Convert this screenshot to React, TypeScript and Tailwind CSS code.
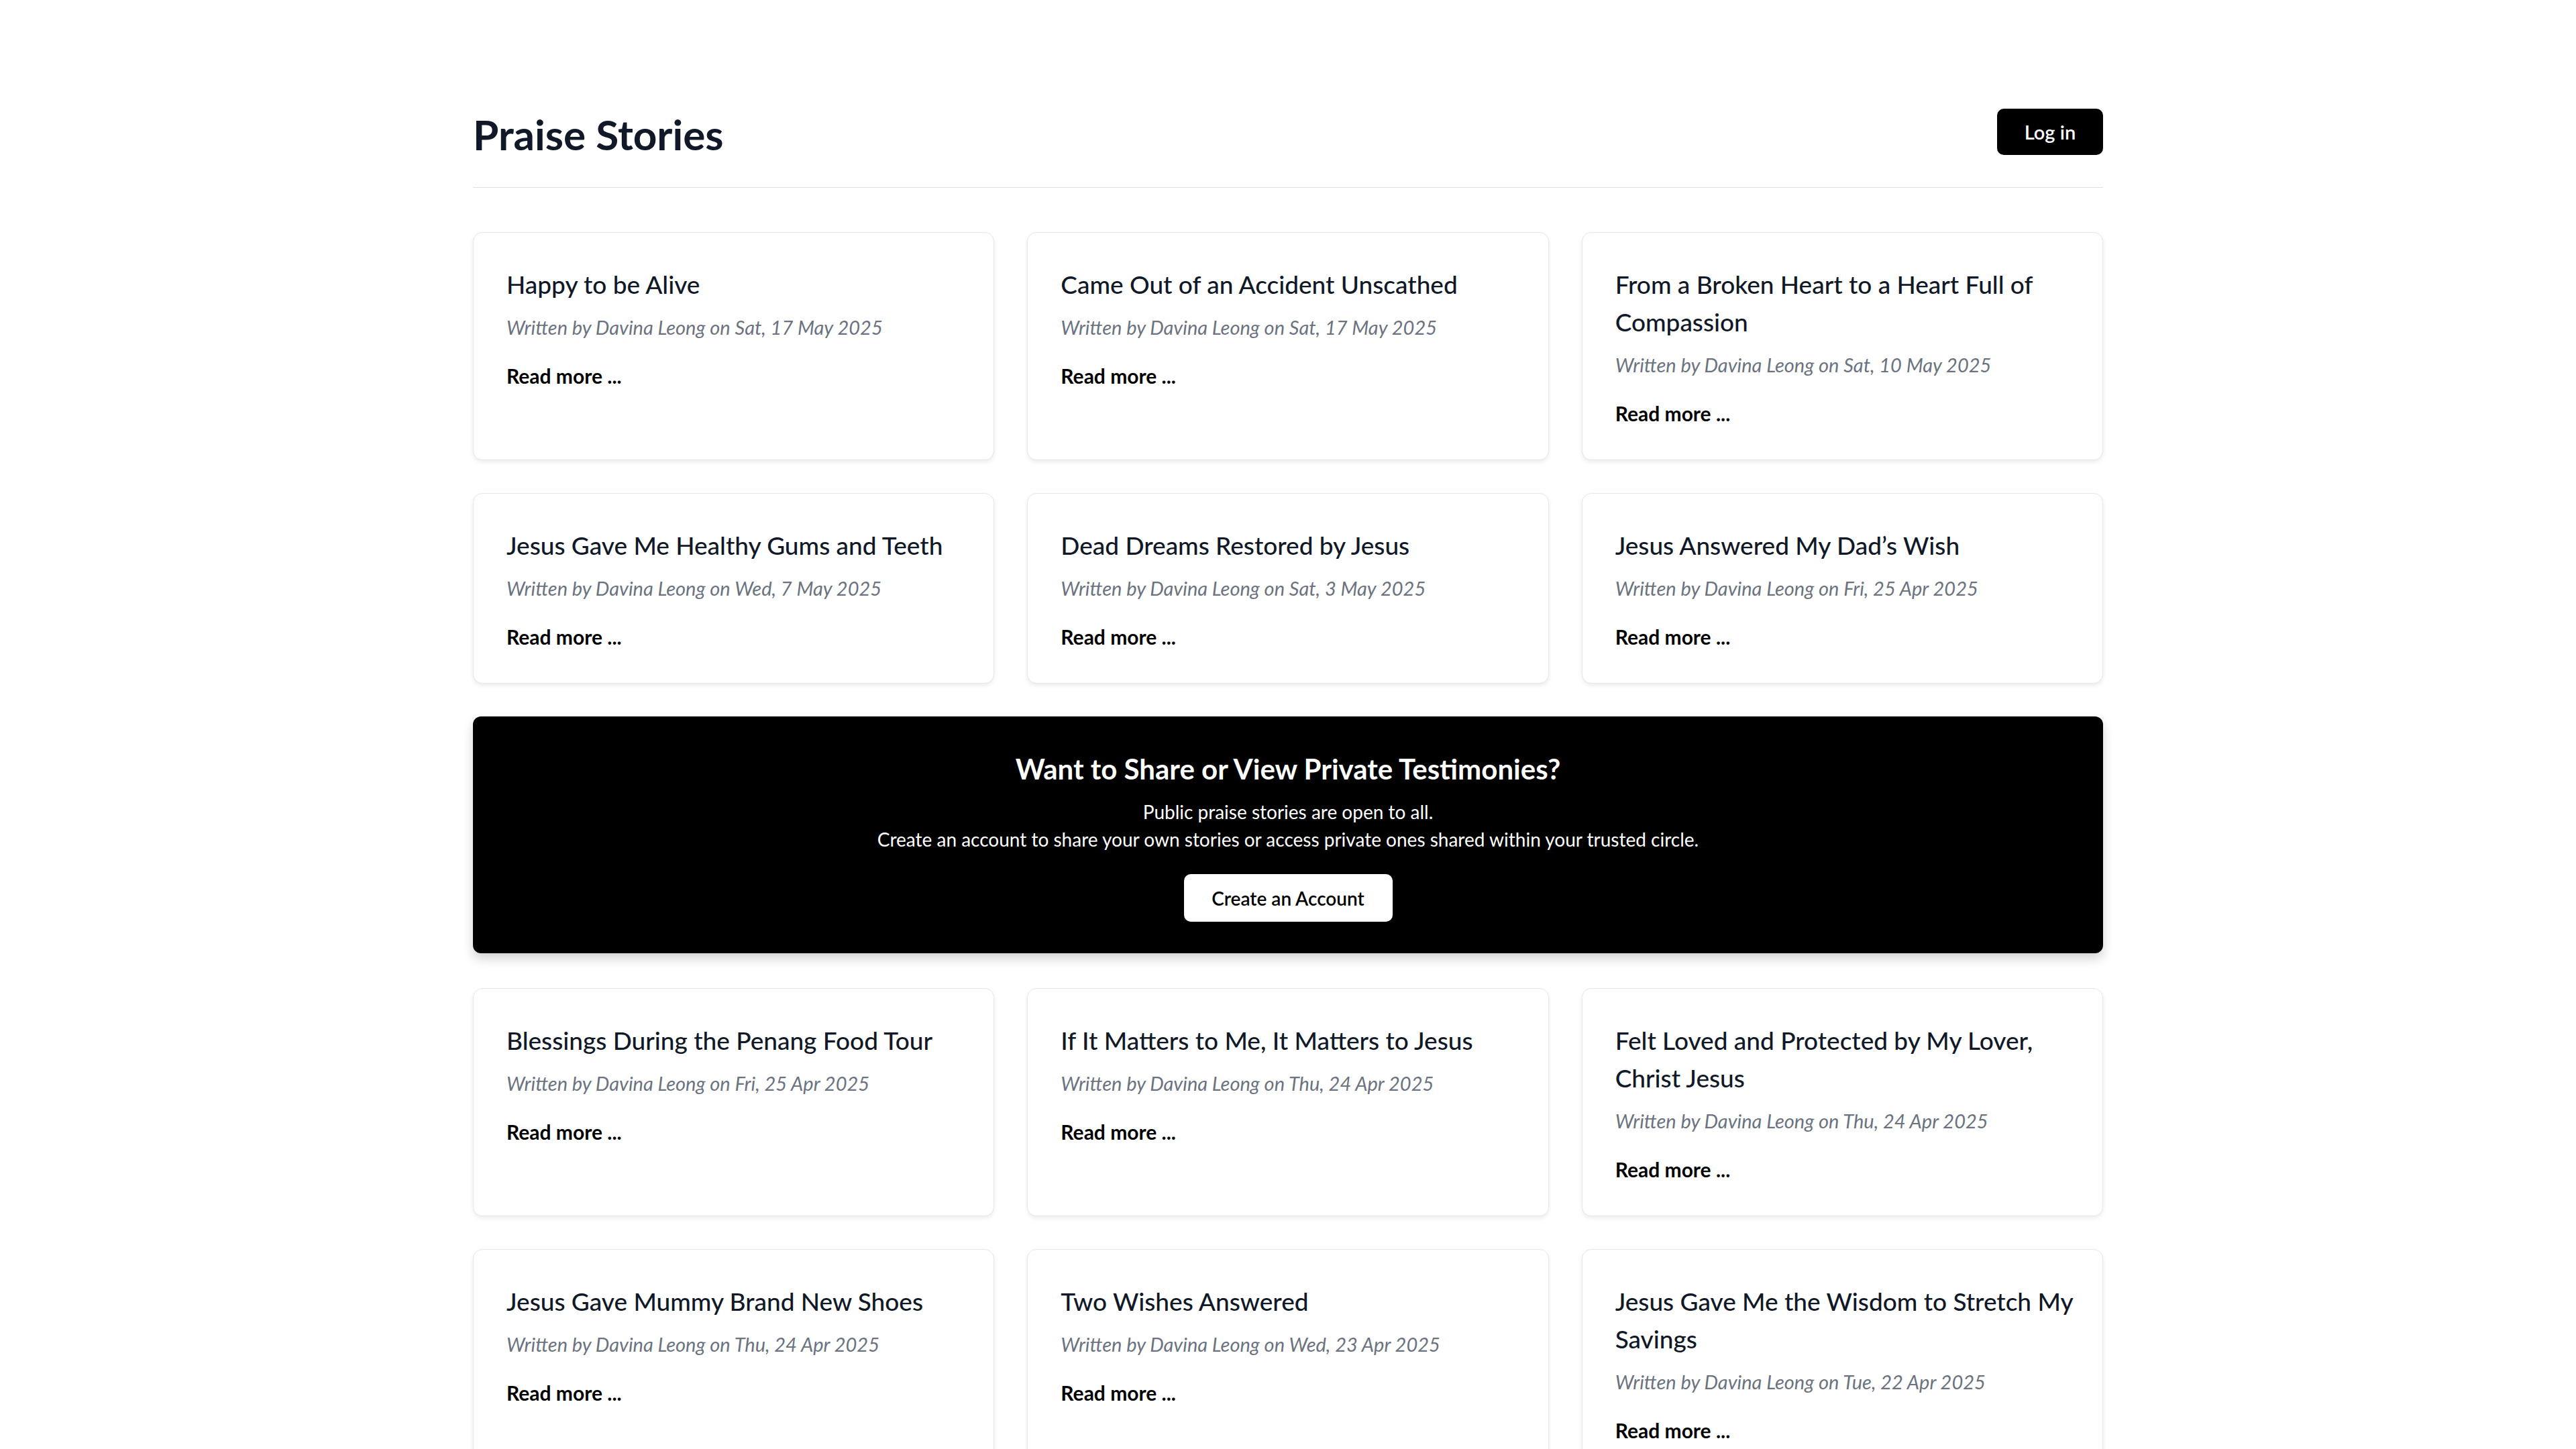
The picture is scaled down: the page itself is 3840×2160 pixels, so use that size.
import React from "react";

type Story = { title: string; date: string };

const rowsA: Story[] = [
  { title: "Happy to be Alive", date: "Sat, 17 May 2025" },
  { title: "Came Out of an Accident Unscathed", date: "Sat, 17 May 2025" },
  { title: "From a Broken Heart to a Heart Full of Compassion", date: "Sat, 10 May 2025" },
  { title: "Jesus Gave Me Healthy Gums and Teeth", date: "Wed, 7 May 2025" },
  { title: "Dead Dreams Restored by Jesus", date: "Sat, 3 May 2025" },
  { title: "Jesus Answered My Dad\u2019s Wish", date: "Fri, 25 Apr 2025" },
];

const rowsB: Story[] = [
  { title: "Blessings During the Penang Food Tour", date: "Fri, 25 Apr 2025" },
  { title: "If It Matters to Me, It Matters to Jesus", date: "Thu, 24 Apr 2025" },
  { title: "Felt Loved and Protected by My Lover, Christ Jesus", date: "Thu, 24 Apr 2025" },
  { title: "Jesus Gave Mummy Brand New Shoes", date: "Thu, 24 Apr 2025" },
  { title: "Two Wishes Answered", date: "Wed, 23 Apr 2025" },
  { title: "Jesus Gave Me the Wisdom to Stretch My Savings", date: "Tue, 22 Apr 2025" },
];

function Card({ story }: { story: Story }) {
  return (
    <div className="flex flex-col rounded-[14px] border border-[#e5e7eb] bg-white pl-[49px] pr-[40px] pt-[49px] pb-[49px] shadow-[0_3px_6px_rgba(0,0,0,0.08)]">
      <h2 className="text-[37px] leading-[56px] font-medium text-[#111827]">{story.title}</h2>
      <p className="mt-[16px] text-[29px] leading-[39px] italic text-[#6b7280]">
        Written by Davina Leong on {story.date}
      </p>
      <a className="mt-[34px] text-[30px] leading-[39px] font-bold text-black">Read more ...</a>
    </div>
  );
}

function Grid({ stories }: { stories: Story[] }) {
  return (
    <div className="grid grid-cols-3 gap-[49px]">
      {stories.map((s) => (
        <Card key={s.title} story={s} />
      ))}
    </div>
  );
}

export default function App() {
  return (
    <div className="min-h-screen bg-white font-['Lato',_'Open_Sans',_sans-serif]">
      <div className="mx-auto w-[2430px] pt-[160px] pb-[120px]">
        <header className="flex h-[120px] items-start justify-between border-b border-[#dde1e8]">
          <h1 className="mt-[4px] text-[62px] leading-[72px] font-bold text-[#111827]">Praise Stories</h1>
          <button className="mt-[2px] flex h-[69px] w-[158px] items-center justify-center rounded-[10px] bg-black text-[29px] font-semibold text-white">
            Log in
          </button>
        </header>

        <div className="mt-[66px]">
          <Grid stories={rowsA} />
        </div>

        <section className="mt-[49px] flex flex-col items-center rounded-[12px] bg-black pt-[49px] pb-[47px] text-center text-white shadow-[0_8px_16px_rgba(0,0,0,0.18)]">
          <h3 className="text-[42px] leading-[59px] font-bold">Want to Share or View Private Testimonies?</h3>
          <div className="mt-[14px] text-[28px] leading-[41px]">
            <p>Public praise stories are open to all.</p>
            <p>Create an account to share your own stories or access private ones shared within your trusted circle.</p>
          </div>
          <button className="mt-[31px] flex h-[71px] w-[311px] items-center justify-center rounded-[10px] bg-white text-[28px] font-semibold text-black">
            Create an Account
          </button>
        </section>

        <div className="mt-[52px]">
          <Grid stories={rowsB} />
        </div>
      </div>
    </div>
  );
}
